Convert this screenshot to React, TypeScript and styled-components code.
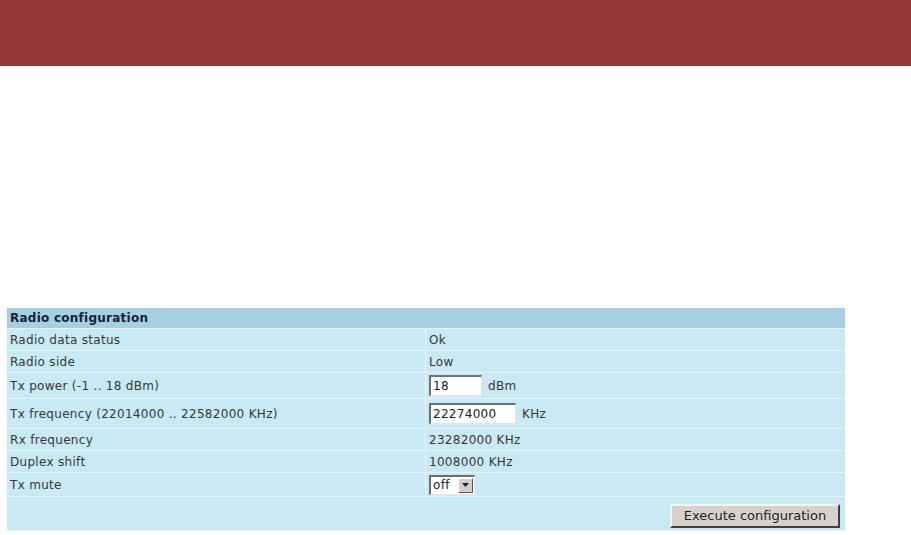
import styled, { createGlobalStyle } from "styled-components";

const Global = createGlobalStyle`
  body {
    margin: 0;
    background: #fff;
    font-family: "DejaVu Sans", Verdana, sans-serif;
  }
`;

const TopBar = styled.div`
  height: 66px;
  background: #953735;
`;

const Panel = styled.div`
  margin: 242px 0 0 7px;
  width: 838px;
  display: flex;
  flex-direction: column;
  gap: 1px;
  background: #e6f4fa;
  padding: 0 0 1px 0;
`;

const Head = styled.div`
  height: 20px;
  background: #a5d0e1;
  color: #14223a;
  font-weight: bold;
  font-size: 12px;
  letter-spacing: 0.25px;
  padding-left: 3px;
  display: flex;
  align-items: center;
`;

const Row = styled.div<{ $h: number }>`
  display: grid;
  grid-template-columns: 418px 1fr;
  gap: 1px;
  height: ${(p) => p.$h}px;
`;

const Cell = styled.div`
  background: #c9e9f5;
  color: #383838;
  font-size: 12px;
  letter-spacing: 0.3px;
  padding-left: 3px;
  display: flex;
  align-items: center;
  gap: 6px;
`;

const TextBox = styled.div<{ $w: number }>`
  width: ${(p) => p.$w}px;
  height: 21px;
  box-sizing: border-box;
  background: #fff;
  border-top: 2px solid #6e6e6e;
  border-left: 2px solid #6e6e6e;
  border-right: 1px solid #e4e4e4;
  border-bottom: 1px solid #e4e4e4;
  font-size: 12px;
  color: #222;
  padding-left: 2px;
  display: flex;
  align-items: center;
`;

const Select = styled.div`
  height: 20px;
  width: 46px;
  box-sizing: border-box;
  background: #fff;
  border-top: 2px solid #6e6e6e;
  border-left: 2px solid #6e6e6e;
  border-right: 1px solid #e4e4e4;
  border-bottom: 1px solid #e4e4e4;
  display: flex;
  align-items: center;
  justify-content: space-between;
  font-size: 12px;
  color: #222;
  padding-left: 2px;
`;

const Arrow = styled.div`
  width: 15px;
  height: 15px;
  margin-right: 1px;
  background: #d4d0c8;
  border: 1px solid;
  border-color: #fff #555 #555 #fff;
  box-sizing: border-box;
  display: flex;
  align-items: center;
  justify-content: center;
`;

const FootRow = styled.div`
  height: 33px;
  background: #c9e9f5;
  display: flex;
  align-items: center;
  justify-content: flex-end;
  padding-right: 5px;
`;

const Button = styled.div`
  width: 170px;
  height: 24px;
  box-sizing: border-box;
  background: #d8d2cc;
  border: 2px solid;
  border-color: #f4f4f4 #404040 #404040 #f4f4f4;
  font-size: 13px;
  color: #222;
  display: flex;
  align-items: center;
  justify-content: center;
  margin-top: 4px;
`;

export default function App() {
  return (
    <>
      <Global />
      <TopBar />
      <Panel>
        <Head>Radio configuration</Head>
        <Row $h={21}>
          <Cell>Radio data status</Cell>
          <Cell>Ok</Cell>
        </Row>
        <Row $h={21}>
          <Cell>Radio side</Cell>
          <Cell>Low</Cell>
        </Row>
        <Row $h={25}>
          <Cell>Tx power (-1 .. 18 dBm)</Cell>
          <Cell>
            <TextBox $w={53}>18</TextBox>
            dBm
          </Cell>
        </Row>
        <Row $h={29}>
          <Cell>Tx frequency (22014000 .. 22582000 KHz)</Cell>
          <Cell>
            <TextBox $w={87}>22274000</TextBox>
            KHz
          </Cell>
        </Row>
        <Row $h={21}>
          <Cell>Rx frequency</Cell>
          <Cell>23282000 KHz</Cell>
        </Row>
        <Row $h={21}>
          <Cell>Duplex shift</Cell>
          <Cell>1008000 KHz</Cell>
        </Row>
        <Row $h={23}>
          <Cell>Tx mute</Cell>
          <Cell>
            <Select>
              off
              <Arrow>
                <svg width="7" height="4" viewBox="0 0 7 4">
                  <path d="M0 0h7L3.5 4z" fill="#222" />
                </svg>
              </Arrow>
            </Select>
          </Cell>
        </Row>
        <FootRow>
          <Button>Execute configuration</Button>
        </FootRow>
      </Panel>
    </>
  );
}
